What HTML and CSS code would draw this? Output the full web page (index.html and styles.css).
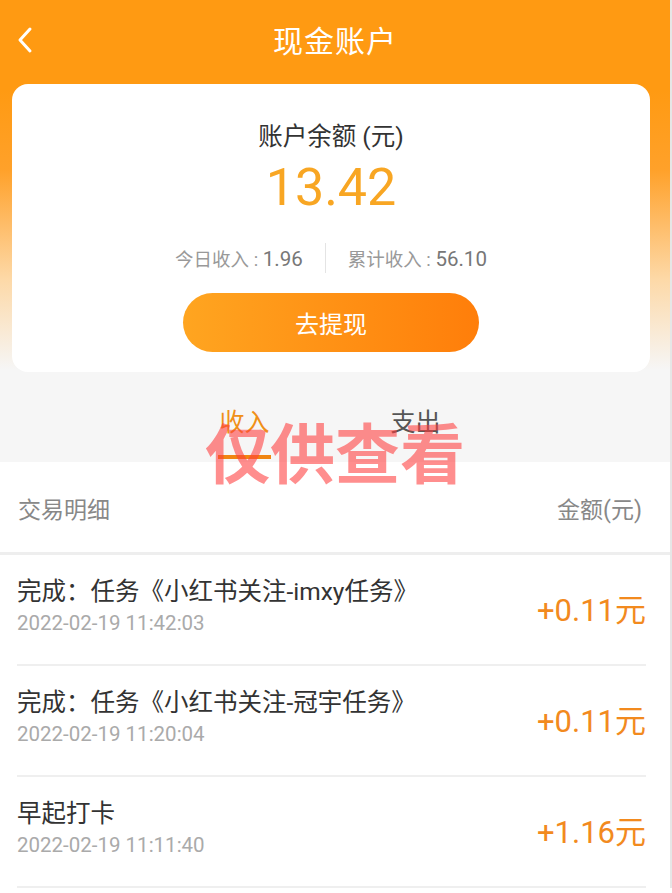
FILE: index.html
```html
<!DOCTYPE html>
<html lang="zh-CN">
<head>
<meta charset="utf-8">
<title>现金账户</title>
<link rel="stylesheet" href="styles.css">
</head>
<body>
<div class="page">
  <div class="hero">
    <header class="topbar">
      <svg class="back" width="18" height="28" viewBox="0 0 18 28"><path d="M14 3 L4 14 L14 25" fill="none" stroke="#fff" stroke-width="3" stroke-linecap="round" stroke-linejoin="round"/></svg>
      <h1 class="title">现金账户</h1>
    </header>
    <section class="card">
      <div class="label">账户余额 (元)</div>
      <div class="balance">13.42</div>
      <div class="stats">
        <span class="stat">今日收入 : <b>1.96</b></span>
        <span class="divider"></span>
        <span class="stat">累计收入 : <b>56.10</b></span>
      </div>
      <button class="withdraw">去提现</button>
    </section>
    <nav class="tabs">
      <span class="tab active">收入</span>
      <span class="tab">支出</span>
    </nav>
  </div>
  <section class="list">
    <div class="list-head">
      <span>交易明细</span>
      <span>金额(元)</span>
    </div>
    <div class="rows">
      <div class="row">
        <div class="info">
          <div class="name">完成：任务《小红书关注-imxy任务》</div>
          <div class="time">2022-02-19 11:42:03</div>
        </div>
        <div class="amount">+0.11元</div>
      </div>
      <div class="row">
        <div class="info">
          <div class="name">完成：任务《小红书关注-冠宇任务》</div>
          <div class="time">2022-02-19 11:20:04</div>
        </div>
        <div class="amount">+0.11元</div>
      </div>
      <div class="row">
        <div class="info">
          <div class="name">早起打卡</div>
          <div class="time">2022-02-19 11:11:40</div>
        </div>
        <div class="amount">+1.16元</div>
      </div>
    </div>
  </section>
  <div class="watermark">仅供查看</div>
</div>
</body>
</html>
```
FILE: styles.css
```css
* { box-sizing: border-box; }
html, body { margin: 0; padding: 0; }
body {
  font-family: Roboto, "Noto Sans CJK SC", sans-serif;
  background: #fff;
  width: 672px;
  height: 893px;
  overflow: hidden;
}
.page {
  position: relative;
  width: 672px;
  border-right: 2px solid #e6e6e6;
}
.hero {
  background: linear-gradient(to bottom, #ff9a12 0, #ff9a12 90px, #ffa12a 170px, #fdd9a8 280px, #f6f6f6 370px, #f6f6f6 100%);
}
.topbar {
  height: 84px;
  display: flex;
  align-items: center;
  justify-content: center;
  position: relative;
}
.back {
  position: absolute;
  left: 16px;
  top: 26px;
}
.title {
  margin: 0 0 6px;
  font-size: 30px;
  font-weight: 400;
  color: #fff;
  letter-spacing: 1px;
}
.card {
  margin: 0 12px;
  width: 638px;
  height: 288px;
  background: #fff;
  border-radius: 16px;
  display: flex;
  flex-direction: column;
  align-items: center;
  padding-top: 38px;
}
.label {
  font-size: 24.5px;
  line-height: 30px;
  color: #333;
}
.balance {
  font-size: 52px;
  line-height: 56px;
  margin-top: 8px;
  color: #f8a623;
}
.stats {
  margin-top: 27px;
  display: flex;
  align-items: center;
  gap: 22px;
  font-size: 18.5px;
  color: #999;
  height: 30px;
}
.stat b { font-weight: 400; color: #777; font-size: 20.5px; }
.divider {
  width: 1px;
  height: 30px;
  background: #e4e4e4;
}
.withdraw {
  margin-top: 20px;
  width: 296px;
  height: 59px;
  border: none;
  border-radius: 30px;
  background: linear-gradient(to right, #ffa520, #ff7e0a);
  color: #fff;
  font-family: "Noto Sans CJK SC", sans-serif;
  font-size: 24px;
}
.tabs {
  height: 90px;
  display: flex;
  justify-content: center;
  gap: 118px;
  padding-right: 10px;
}
.tab {
  font-size: 25px;
  color: #555;
  padding-top: 30px;
  height: 90px;
  width: 53px;
  text-align: center;
}
.tab.active {
  color: #f09018;
  border-bottom: 4px solid #f08512;
  height: 87px;
}
.list {
  background: #fff;
}
.list-head {
  height: 93px;
  display: flex;
  justify-content: space-between;
  align-items: center;
  padding: 2px 28px 0 18px;
  font-size: 23px;
  color: #888;
  border-bottom: 3px solid #eeeeee;
}
.rows {
  padding: 0 24px 0 17px;
}
.row {
  height: 111px;
  display: flex;
  align-items: center;
  justify-content: space-between;
  border-bottom: 2px solid #efefef;
  padding-bottom: 8px;
}
.name {
  font-size: 24.5px;
  color: #333;
  line-height: 34px;
}
.time {
  font-size: 20.5px;
  color: #aaa;
  line-height: 28px;
}
.amount {
  font-size: 31px;
  color: #f28a1e;
  padding-top: 4px;
}
.watermark {
  position: absolute;
  left: 205px;
  top: 410px;
  font-family: "Noto Sans CJK SC", sans-serif;
  font-weight: 700;
  font-size: 65px;
  line-height: 80px;
  color: rgba(255, 60, 60, 0.58);
}
```
